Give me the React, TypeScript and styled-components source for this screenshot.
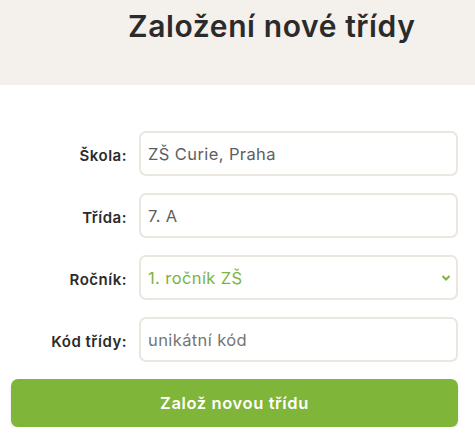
import styled, { createGlobalStyle } from 'styled-components';

const GlobalStyle = createGlobalStyle`
    body {
        margin: 0;
        background: #fff;
        font-family: 'Inter', 'Open Sans', sans-serif;
    }
`;

const Header = styled.header`
    background: #f4f0ec;
    height: 85px;
    box-sizing: border-box;
    padding: 8px 0 0 128px;
`;

const Title = styled.h1`
    margin: 0;
    font-size: 30px;
    font-weight: 600;
    color: #2b2b2b;
    letter-spacing: 0.6px;
`;

const Form = styled.form`
    display: flex;
    flex-direction: column;
    gap: 17px;
    padding: 46px 17px 0 11px;
`;

const Row = styled.label`
    display: grid;
    grid-template-columns: 128px 1fr;
    align-items: center;
`;

const Label = styled.span`
    justify-self: end;
    padding-right: 12px;
    padding-top: 3px;
    font-size: 15px;
    font-weight: 600;
    letter-spacing: 0.5px;
    color: #2b2b2b;
`;

const fieldStyle = `
    box-sizing: border-box;
    width: 100%;
    height: 45px;
    border: 2px solid #ece6e1;
    border-radius: 7px;
    padding: 0 7px;
    font-family: 'Inter', 'Open Sans', sans-serif;
    font-size: 16.5px;
    letter-spacing: 0.4px;
    background: #fff;
    outline: none;
`;

const Input = styled.input`
    ${fieldStyle}
    color: #5e5e5e;
    ::placeholder {
        color: #5e5e5e;
    }
`;

const SelectWrap = styled.div`
    position: relative;
`;

const Select = styled.select`
    ${fieldStyle}
    appearance: none;
    color: #7cb342;
`;

const Chevron = styled.svg`
    position: absolute;
    right: 7px;
    top: 50%;
    transform: translateY(-50%);
    pointer-events: none;
`;

const SubmitButton = styled.button`
    height: 48px;
    border: none;
    border-radius: 7px;
    background: #7fb539;
    color: #fff;
    font-family: 'Inter', 'Open Sans', sans-serif;
    font-size: 16.5px;
    font-weight: 600;
    letter-spacing: 0.6px;
    box-shadow: 0 2px 3px rgba(0, 0, 0, 0.12);
`;

export default function App() {
    return (
        <main>
            <GlobalStyle />
            <Header>
                <Title>Založení nové třídy</Title>
            </Header>
            <Form onSubmit={e => e.preventDefault()}>
                <Row>
                    <Label>Škola:</Label>
                    <Input defaultValue="ZŠ Curie, Praha" />
                </Row>
                <Row>
                    <Label>Třída:</Label>
                    <Input defaultValue="7. A" />
                </Row>
                <Row>
                    <Label>Ročník:</Label>
                    <SelectWrap>
                        <Select defaultValue="1">
                            <option value="1">1. ročník ZŠ</option>
                            <option value="2">2. ročník ZŠ</option>
                        </Select>
                        <Chevron width="10" height="7" viewBox="0 0 10 7">
                            <path d="M1.5 1.5 L5 5 L8.5 1.5" fill="none" stroke="#7cb342" strokeWidth="2" />
                        </Chevron>
                    </SelectWrap>
                </Row>
                <Row>
                    <Label>Kód třídy:</Label>
                    <Input placeholder="unikátní kód" />
                </Row>
                <SubmitButton type="submit">Založ novou třídu</SubmitButton>
            </Form>
        </main>
    );
}
